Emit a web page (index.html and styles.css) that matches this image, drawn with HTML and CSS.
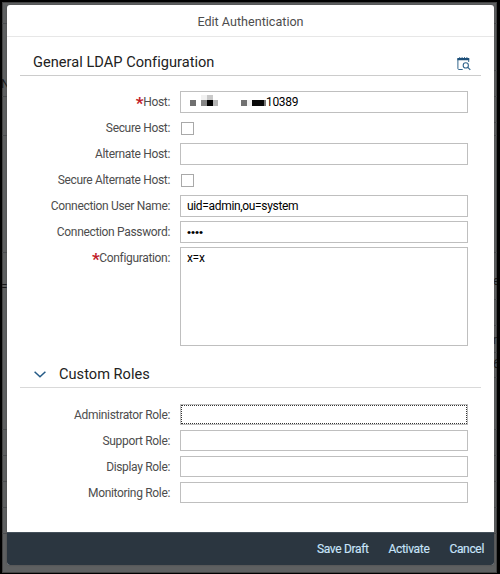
FILE: index.html
```html
<!DOCTYPE html>
<html lang="en">
<head>
<meta charset="utf-8">
<title>Edit Authentication</title>
<link rel="stylesheet" href="styles.css">
</head>
<body>
<div class="backdrop">
  <i class="line left l1"></i><i class="line left l2"></i><i class="line left l3"></i><i class="line left l4"></i>
  <i class="line r1"></i><i class="line r2"></i><i class="line r3"></i><i class="line r4"></i><i class="line r5"></i><i class="line r6"></i>
  <i class="line b1"></i><i class="line b2"></i><i class="line b3"></i><i class="line b4"></i><i class="line b5"></i>
  <span class="behind n">N</span><span class="behind eq">=</span>
  <span class="behind e">e</span><span class="behind m">n</span><span class="behind six">6</span>
  <main class="dialog">
    <header class="title">Edit Authentication</header>
    <div class="content">
      <section class="general">
        <div class="section-head">
          <h2>General LDAP Configuration</h2>
          <svg class="lookup" viewBox="0 0 14 14" fill="none" stroke="#34678d">
            <path d="M5.7 12.5H1.8a.9.9 0 0 1-.9-.9V1.5M11.7 1.5v3.5"/>
            <path d="M.4 .9h11.8v2.3H.4z" fill="#1d4f79" stroke="none"/>
            <path d="M2.7 0v1M5.1 0v1M7.5 0v1M9.9 0v1" stroke="#1d4f79" stroke-width=".8"/>
            <circle cx="8.8" cy="8.4" r="2.6" stroke-width="1.1"/>
            <path d="M10.6 10.2l2.7 2.7" stroke-width="1.2"/>
          </svg>
        </div>
        <div class="form">
          <label><b>*</b>Host:</label>
          <div class="field host">
            <svg class="mask" viewBox="0 0 81 18" shape-rendering="crispEdges">
              <path fill="#707070" d="M5 8h6v6H5zM56 8h6v6h-6z"/>
              <path fill="#f1f1f1" d="M16 3h6v5h-6zM62 8h6v6h-6z"/>
              <path fill="#c9c9c9" d="M22 3h6v5h-6z"/>
              <path fill="#858585" d="M16 8h6v6h-6z"/>
              <path fill="#000" d="M22 8h6v6h-6z"/>
              <path fill="#b4b4b4" d="M28 8h5v6h-5z"/>
              <path fill="#080808" d="M67 8h12v6H67z"/>
              <path fill="#777" d="M79 8h2v6h-2z"/>
            </svg><span>10389</span>
          </div>
          <label>Secure Host:</label><span class="check"></span>
          <label>Alternate Host:</label><div class="field"></div>
          <label>Secure Alternate Host:</label><span class="check"></span>
          <label>Connection User Name:</label><div class="field"><span>uid=admin,ou=system</span></div>
          <label>Connection Password:</label><div class="field"><span class="dots">••••</span></div>
          <label><b>*</b>Configuration:</label><div class="field area"><span>x=x</span></div>
        </div>
      </section>
      <section class="roles">
        <div class="section-head">
          <svg class="chevron" viewBox="0 0 12 7" fill="none" stroke="#245a86" stroke-width="1.5"><path d="M.6.7L6 5.8 11.4.7"/></svg>
          <h2>Custom Roles</h2>
        </div>
        <div class="form">
          <label>Administrator Role:</label><div class="field focus"></div>
          <label>Support Role:</label><div class="field"></div>
          <label>Display Role:</label><div class="field"></div>
          <label>Monitoring Role:</label><div class="field"></div>
        </div>
      </section>
    </div>
    <footer><span>Save Draft</span><span>Activate</span><span>Cancel</span></footer>
  </main>
</div>
</body>
</html>
```
FILE: styles.css
```css
* { box-sizing: border-box; }
body { margin: 0; font-family: Roboto, "Noto Sans", sans-serif; font-size: 12px; letter-spacing: -.33px; color: #4d4d4d; }
.backdrop { position: relative; width: 500px; height: 574px; border: 2px solid #000; border-right-width: 3px; border-bottom-width: 1px; background: #5e6061; padding: 3px 3px 0 5px; overflow: hidden; box-shadow: inset 0 0 0 1px #444; }
.line { position: absolute; left: 490px; width: 6px; height: 1px; background: #4b4d4f; }
.line.left, .b1, .b2, .b3, .b4, .b5 { left: 0; width: 496px; }
.l1 { top: 21px; } .l2 { top: 94px; } .l3 { top: 133px; } .l4 { top: 250px; }
.r1 { top: 68px; } .r2 { top: 297px; } .r3 { top: 323px; } .r4 { top: 350px; } .r5 { top: 375px; } .r6 { top: 120px; }
.b1 { top: 427px; } .b2 { top: 453px; } .b3 { top: 479px; } .b4 { top: 505px; } .b5 { top: 531px; }
.behind { position: absolute; color: #181818; font-size: 12px; line-height: 14px; }
.n { left: -1px; top: 75px; } .eq { left: -1px; top: 278px; }
.e { left: 491px; top: 272px; } .m { left: 491px; top: 331px; } .six { left: 491px; top: 355px; }
.dialog { position: relative; width: 487px; height: 560px; display: flex; flex-direction: column; background: #fff; border-radius: 3px; overflow: hidden; box-shadow: 0 0 2px #444; }
.title { height: 32px; padding-top: 1px; border-bottom: 1px solid #e7e7e7; text-align: center; font-size: 12.6px; letter-spacing: 0; line-height: 31px; }
.content { flex: 1; padding: 0 13px; }
.section-head { display: flex; align-items: center; height: 39px; padding: 0 10px 0 13px; border-bottom: 1px solid #ccc; }
.section-head h2 { margin: 0; color: #222; font-weight: 400; font-size: 14.6px; letter-spacing: .02px; line-height: 20px; }
.general .section-head { padding-top: 12px; }
.lookup { width: 14px; height: 14px; margin: 3px 0 0 auto; }
.chevron { width: 12px; height: 7px; margin: 0 13px 0 1px; }
.roles { margin-top: 2px; }
.roles .section-head { padding-top: 13px; height: 40px; border-color: #d9d9d9; }
.form { display: grid; grid-template-columns: 150px 288px; column-gap: 10px; row-gap: 4px; padding-top: 15px; grid-auto-rows: minmax(22px, auto); }
.roles .form { padding-top: 16px; }
label { height: 22px; text-align: right; line-height: 22px; white-space: nowrap; }
label b { color: #c11c2a; font-size: 17px; line-height: 10px; vertical-align: -3px; }
.field { height: 22px; border: 1px solid #bfbfbf; color: #000; line-height: 20px; padding-left: 6px; display: flex; }
.roles .field { height: 21px; }
.field.area { height: 99px; }
.host { padding-left: 4px; }
.mask { width: 81px; height: 18px; }
.dots { font-family: "Liberation Sans", sans-serif; font-size: 11.5px; letter-spacing: 0; }
.check { width: 13px; height: 13px; border: 1px solid #a9a9a9; margin: 5px 0 0 1px; }
.focus { outline: 1px dotted #333; outline-offset: -2px; }
footer { height: 33px; background: #2b3640; border-top: 1px solid #45515b; color: #c8e4fa; display: flex; justify-content: flex-end; gap: 20px; padding-right: 10px; line-height: 33px; -webkit-text-stroke: .15px; }
```
